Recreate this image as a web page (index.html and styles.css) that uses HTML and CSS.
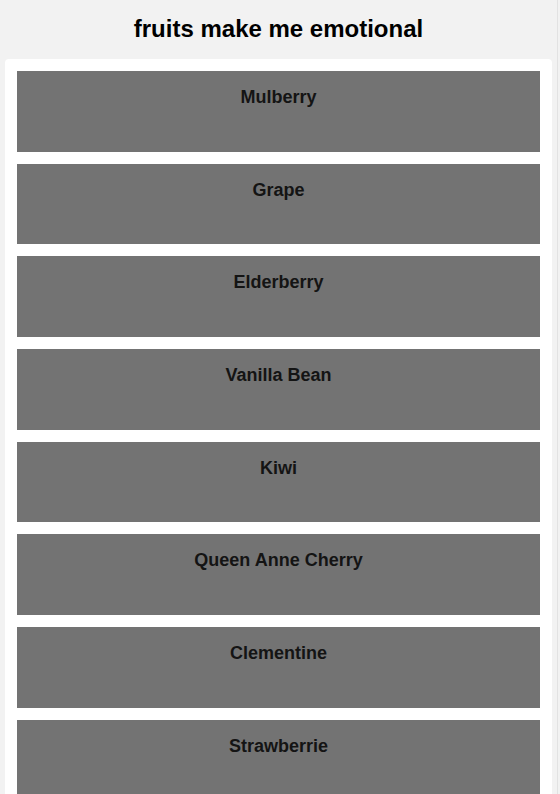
FILE: index.html
```html
<!DOCTYPE html>
<html>
<head>
<meta charset="utf-8">
<link rel="stylesheet" href="styles.css">
</head>
<body>
<div class="frame">
  <h1 class="title">fruits make me emotional</h1>
  <div class="card">
    <div class="item"><h3>Mulberry</h3></div>
    <div class="item"><h3>Grape</h3></div>
    <div class="item"><h3>Elderberry</h3></div>
    <div class="item"><h3>Vanilla Bean</h3></div>
    <div class="item"><h3>Kiwi</h3></div>
    <div class="item"><h3>Queen Anne Cherry</h3></div>
    <div class="item"><h3>Clementine</h3></div>
    <div class="item"><h3>Strawberrie</h3></div>
  </div>
</div>
</body>
</html>
```
FILE: styles.css
```css
html, body {
  margin: 0;
  padding: 0;
  background: #f2f2f2;
  font-family: "Liberation Sans", Arial, sans-serif;
}
.frame {
  width: 557px;
  border-right: 1px solid #e2e2e2;
  min-height: 100vh;
}
.title {
  margin: 0;
  padding: 14px 0 0 0;
  height: 45px;
  text-align: center;
  font-size: 24px;
  font-weight: bold;
  color: #000;
  line-height: 30px;
}
.card {
  margin: 0 5px;
  background: #fff;
  border-radius: 4px;
  padding: 12px;
  display: flex;
  flex-direction: column;
  gap: 12px;
}
.item {
  background: #737373;
  height: 80.7px;
  box-sizing: border-box;
  padding-top: 16px;
}
.item h3 {
  margin: 0;
  text-align: center;
  font-size: 18px;
  line-height: 21px;
  font-weight: bold;
  color: #141414;
}
```
